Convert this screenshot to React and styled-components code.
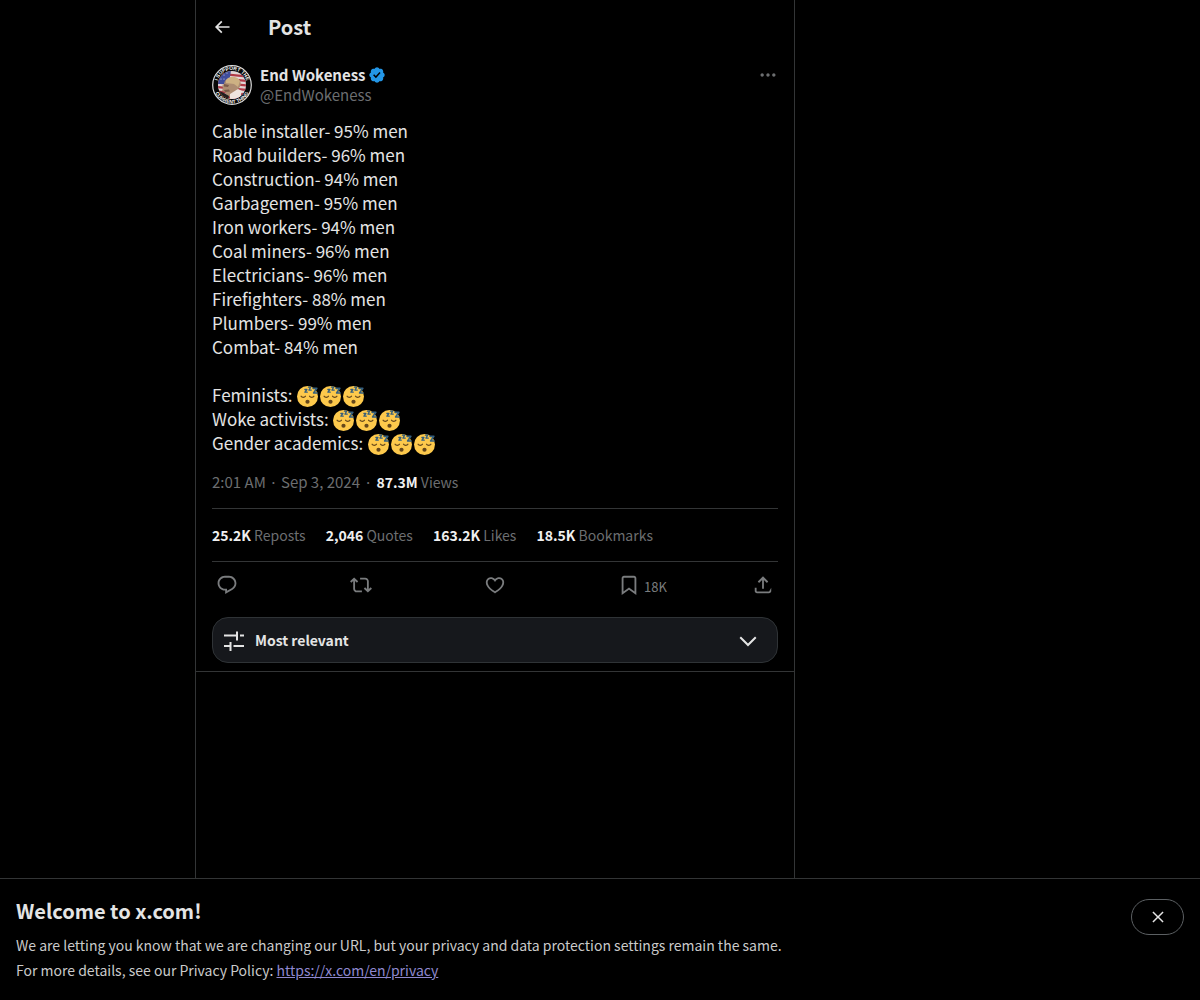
import React from 'react';
import styled, { createGlobalStyle } from 'styled-components';

const icons = {
  back: 'M7.414 13l5.043 5.04-1.414 1.42L3.586 12l7.457-7.46 1.414 1.42L7.414 11H21v2H7.414z',
  more: 'M3 12c0-1.1.9-2 2-2s2 .9 2 2-.9 2-2 2-2-.9-2-2zm9 2c1.1 0 2-.9 2-2s-.9-2-2-2-2 .9-2 2 .9 2 2 2zm7 0c1.1 0 2-.9 2-2s-.9-2-2-2-2 .9-2 2 .9 2 2 2z',
  reply: 'M1.751 10c0-4.42 3.584-8 8.005-8h4.366c4.49 0 8.129 3.64 8.129 8.13 0 2.96-1.607 5.68-4.196 7.11l-8.054 4.46v-3.69h-.067c-4.49.1-8.183-3.51-8.183-8.01zm8.005-6c-3.317 0-6.005 2.69-6.005 6 0 3.37 2.77 6.08 6.138 6.01l.351-.01h1.761v2.3l5.087-2.81c1.951-1.08 3.163-3.13 3.163-5.36 0-3.39-2.744-6.13-6.129-6.13H9.756z',
  repost: 'M4.5 3.88l4.432 4.14-1.364 1.46L5.5 7.55V16c0 1.1.896 2 2 2H13v2H7.5c-2.209 0-4-1.79-4-4V7.55L1.432 9.48.068 8.02 4.5 3.88zM16.5 6H11V4h5.5c2.209 0 4 1.79 4 4v8.45l2.068-1.93 1.364 1.46-4.432 4.14-4.432-4.14 1.364-1.46 2.068 1.93V8c0-1.1-.896-2-2-2z',
  like: 'M16.697 5.5c-1.222-.06-2.679.51-3.89 2.16l-.805 1.09-.806-1.09C9.984 6.01 8.526 5.44 7.304 5.5c-1.243.07-2.349.78-2.91 1.91-.552 1.12-.633 2.78.479 4.82 1.074 1.97 3.257 4.27 7.129 6.61 3.87-2.34 6.052-4.64 7.126-6.61 1.111-2.04 1.03-3.7.477-4.82-.561-1.13-1.666-1.84-2.908-1.91zm4.187 7.69c-1.351 2.48-4.001 5.12-8.379 7.67l-.503.3-.504-.3c-4.379-2.55-7.029-5.19-8.382-7.67-1.36-2.5-1.41-4.86-.514-6.67.887-1.79 2.647-2.91 4.601-3.01 1.651-.09 3.368.56 4.798 2.01 1.429-1.45 3.146-2.1 4.796-2.01 1.954.1 3.714 1.22 4.601 3.01.896 1.81.846 4.17-.514 6.67z',
  bookmark: 'M4 4.5C4 3.12 5.119 2 6.5 2h11C18.881 2 20 3.12 20 4.5v18.44l-8-5.71-8 5.71V4.5zM6.5 4c-.276 0-.5.22-.5.5v14.56l6-4.29 6 4.29V4.5c0-.28-.224-.5-.5-.5h-11z',
  share: 'M12 2.59l5.7 5.7-1.41 1.42L13 6.41V16h-2V6.41l-3.3 3.3-1.41-1.42L12 2.59zM21 15l-.02 3.51c0 1.38-1.12 2.49-2.5 2.49H5.5C4.11 21 3 19.88 3 18.5V15h2v3.5c0 .28.22.5.5.5h12.98c.28 0 .5-.22.5-.5L21 15z',
  close: 'M10.59 12L4.54 5.96l1.42-1.42L12 10.59l6.04-6.05 1.42 1.42L13.41 12l6.05 6.04-1.42 1.42L12 13.41l-6.04 6.05-1.42-1.42L10.59 12z',
  chevron: 'M3.543 9.96l1.414-1.42L12 15.59l7.043-7.05 1.414 1.42L12 18.41 3.543 9.96z',
  tune: 'M2 6.500h12V3.500h2v9h-2v-4H2zM18 6.500h4v2h-4zM2 17h5.500v-3h2v9h-2v-4H2zM11.500 17H22v2H11.500z',
};

const lines = [
  'Cable installer- 95% men',
  'Road builders- 96% men',
  'Construction- 94% men',
  'Garbagemen- 95% men',
  'Iron workers- 94% men',
  'Coal miners- 96% men',
  'Electricians- 96% men',
  'Firefighters- 88% men',
  'Plumbers- 99% men',
  'Combat- 84% men',
];

const sleepers = ['Feminists:', 'Woke activists:', 'Gender academics:'];

const stats = [
  { count: '25.2K', label: 'Reposts' },
  { count: '2,046', label: 'Quotes' },
  { count: '163.2K', label: 'Likes' },
  { count: '18.5K', label: 'Bookmarks' },
];

const actions = [
  { icon: 'reply', label: 'Reply' },
  { icon: 'repost', label: 'Repost' },
  { icon: 'like', label: 'Like' },
  { icon: 'bookmark', label: 'Bookmark', count: '18K' },
  { icon: 'share', label: 'Share' },
];

function Icon({ name, size = 22 }) {
  return (
    <Svg viewBox="0 0 24 24" $size={size} aria-hidden="true">
      <path d={icons[name]} />
    </Svg>
  );
}

function Verified() {
  return (
    <Badge viewBox="0 0 22 22" $size={18} role="img" aria-label="Verified account">
      <path d="M20.396 11c-.018-.646-.215-1.275-.57-1.816-.354-.54-.852-.972-1.438-1.246.223-.607.27-1.264.14-1.897-.131-.634-.437-1.218-.882-1.687-.47-.445-1.053-.75-1.687-.882-.633-.13-1.29-.083-1.897.14-.273-.587-.704-1.086-1.245-1.44S11.647 1.62 11 1.604c-.646.017-1.273.213-1.813.568s-.969.854-1.24 1.44c-.608-.223-1.267-.272-1.902-.14-.635.13-1.22.436-1.69.882-.445.47-.749 1.055-.878 1.688-.13.633-.08 1.29.144 1.896-.587.274-1.087.705-1.443 1.245-.356.54-.555 1.17-.574 1.817.02.647.218 1.276.574 1.817.356.54.856.972 1.443 1.245-.224.606-.274 1.263-.144 1.896.13.634.433 1.218.877 1.688.47.443 1.054.747 1.687.878.633.132 1.29.084 1.897-.136.274.586.705 1.084 1.246 1.439.54.354 1.17.551 1.816.569.647-.016 1.276-.213 1.817-.567s.972-.854 1.245-1.44c.604.239 1.266.296 1.903.164.636-.132 1.22-.447 1.68-.907.46-.46.776-1.044.908-1.681s.075-1.299-.165-1.903c.586-.274 1.084-.705 1.439-1.246.354-.54.551-1.17.569-1.816zM9.662 14.85l-3.429-3.428 1.293-1.302 2.072 2.072 4.4-4.794 1.347 1.246z" />
    </Badge>
  );
}

function SleepingFace() {
  return (
    <Emoji viewBox="0 0 36 36" role="img" aria-label="Sleeping face">
      <circle cx="18" cy="18" r="18" fill="#fdc94c" />
      <circle cx="18" cy="27" r="3.600" fill="#65471b" />
      <g fill="none" stroke="#65471b" strokeWidth="2.200" strokeLinecap="round">
        <path d="M7 17.500c1.500 2.600 6 2.600 7.500 0" />
        <path d="M21.500 17.500c1.500 2.600 6 2.600 7.500 0" />
      </g>
      <g fill="none" stroke="#355f7d" strokeWidth="2.200" strokeLinejoin="round" strokeLinecap="round">
        <path d="M13.500 6h3.500l-3.500 4.500h4" />
        <path d="M19.500 2h4l-3 5h4" />
        <path d="M27.500 4h6.500l-5.500 8h6" strokeWidth="2.800" />
      </g>
    </Emoji>
  );
}

function Avatar() {
  return (
    <AvatarSvg viewBox="0 0 40 40" role="img" aria-label="End Wokeness">
      <defs>
        <clipPath id="flag">
          <circle cx="20" cy="20" r="14" />
        </clipPath>
        <path id="topArc" d="M5 20a15 15 0 0 1 30 0" />
        <path id="bottomArc" d="M1.500 20a18.500 18.500 0 0 0 37 0" />
      </defs>
      <circle cx="20" cy="20" r="19.300" fill="#080808" stroke="#dcdcdc" strokeWidth="1.200" />
      <g clipPath="url(#flag)">
        <path fill="#e2d6d6" d="M5 5h30v30H5z" />
        <path stroke="#b03a46" strokeWidth="2.400" d="M5 8.500l30 3M5 13l30 3M5 17.500l30 3M5 22l30 3M5 26.500l30 3M5 31l30 3" />
        <path fill="#3f4d9c" d="M5 5h14l-2 14H5z" />
        <g fill="#d5d8e8">
          <circle cx="9" cy="14" r=".6" />
          <circle cx="12" cy="10" r=".6" />
          <circle cx="15" cy="8" r=".6" />
          <circle cx="12" cy="14" r=".6" />
        </g>
        <path fill="#ad8d72" d="M12.500 17c1-4 12-6 15.500-1 1.500 3 .5 6-2 8l-2 5-8 3-3-5-3-1 1-3-1-2 2-2z" />
        <path fill="#cdb183" d="M14 15c2-4 11-5 14 1l-2 6-4-3-8-1z" />
        <path fill="#7b5b4a" d="M12 19l5 1-1 2-4-.5zM12 25l5-.5 1 2-5 .5z" />
        <path fill="#eee5df" d="M18 29l8-5 4 2-2 7-10 2z" />
        <path fill="#201e1e" d="M5 25l7 3 5 3-1 4-11-3z" />
      </g>
      <AvatarText>
        <textPath href="#topArc" startOffset="50%" textAnchor="middle">I SUPPORT THE</textPath>
      </AvatarText>
      <AvatarText>
        <textPath href="#bottomArc" startOffset="50%" textAnchor="middle">CURRENT THING</textPath>
      </AvatarText>
    </AvatarSvg>
  );
}

export default function App() {
  return (
    <>
      <GlobalStyle />
      <Layout>
        <Column>
          <Header>
            <IconButton type="button" aria-label="Back">
              <Icon name="back" size={20} />
            </IconButton>
            <Title>Post</Title>
          </Header>
          <Post>
            <Author>
              <Avatar />
              <Names>
                <Name href="#profile">
                  End Wokeness <Verified />
                </Name>
                <Handle href="#profile">@EndWokeness</Handle>
              </Names>
              <MoreButton type="button" aria-label="More">
                <Icon name="more" size={20} />
              </MoreButton>
            </Author>
            <PostText>
              {lines.map((line) => (
                <div key={line}>{line}</div>
              ))}
              <br />
              {sleepers.map((line) => (
                <div key={line}>
                  {line} <SleepingFace />
                  <SleepingFace />
                  <SleepingFace />
                </div>
              ))}
            </PostText>
            <Meta>
              <time>2:01 AM · Sep 3, 2024</time>
              <span>·</span>
              <Stat>
                <Count>87.3M</Count> Views
              </Stat>
            </Meta>
            <Stats>
              {stats.map(({ count, label }) => (
                <Stat key={label}>
                  <Count>{count}</Count> {label}
                </Stat>
              ))}
            </Stats>
            <Actions>
              {actions.map(({ icon, label, count }) => (
                <ActionSlot key={icon}>
                  <ActionButton type="button" aria-label={label}>
                    <Icon name={icon} />
                    {count && <small>{count}</small>}
                  </ActionButton>
                </ActionSlot>
              ))}
            </Actions>
            <SortButton type="button">
              <Icon name="tune" size={24} />
              <span>Most relevant</span>
              <Icon name="chevron" size={24} />
            </SortButton>
          </Post>
        </Column>
      </Layout>
      <Banner>
        <div>
          <Title>Welcome to x.com!</Title>
          <BannerText>
            We are letting you know that we are changing our URL, but your privacy and data protection settings remain the same.
            <br />
            For more details, see our Privacy Policy: <a href="https://x.com/en/privacy">https://x.com/en/privacy</a>
          </BannerText>
        </div>
        <CloseButton type="button" aria-label="Close">
          <Icon name="close" size={18} />
        </CloseButton>
      </Banner>
    </>
  );
}

const GlobalStyle = createGlobalStyle`
  * {
    box-sizing: border-box;
  }
  body {
    margin: 0;
    background: #000;
    color: #e4e4e4;
    font-family: "Noto Sans CJK JP", "Noto Sans", sans-serif;
    font-size: 15px;
    line-height: 20px;
  }
  button {
    margin: 0;
    padding: 0;
    border: 0;
    background: none;
    color: inherit;
    font: inherit;
    cursor: pointer;
  }
`;

const Svg = styled.svg`
  display: block;
  flex: none;
  width: ${({ $size }) => $size}px;
  height: ${({ $size }) => $size}px;
  fill: currentColor;
`;

const Badge = styled(Svg)`
  color: #2396e6;
`;

const Emoji = styled.svg`
  width: 21px;
  height: 21px;
  margin: 0 1px;
  vertical-align: -5px;
`;

const AvatarSvg = styled.svg`
  flex: none;
  width: 40px;
  height: 40px;
`;

const AvatarText = styled.text`
  fill: #f2f2f2;
  font-family: "Liberation Sans", sans-serif;
  font-size: 5px;
  font-weight: 700;
`;

const Layout = styled.div`
  display: grid;
  grid-template-columns: minmax(0, 600px) minmax(0, 210px);
  justify-content: center;
  min-height: 100vh;
`;

const Column = styled.main`
  border: 1px solid #333536;
  border-width: 0 1px;
`;

const Header = styled.header`
  display: flex;
  align-items: center;
  gap: 36px;
  height: 53px;
  padding: 0 16px;
`;

const Title = styled.h2`
  margin: 0;
  font-size: 20px;
  font-weight: 700;
  line-height: 24px;
`;

const IconButton = styled.button`
  display: flex;
  justify-content: center;
  width: 20px;
`;

const Post = styled.article`
  padding: 12px 16px 8px;
  border-bottom: 1px solid #333536;
`;

const Author = styled.div`
  display: flex;
  gap: 8px;
`;

const Names = styled.div`
  display: flex;
  flex: 1;
  flex-direction: column;
  align-items: flex-start;
`;

const Name = styled.a`
  display: flex;
  align-items: center;
  gap: 2px;
  color: inherit;
  font-weight: 700;
  text-decoration: none;
`;

const Handle = styled.a`
  color: #6c6e70;
  text-decoration: none;
`;

const MoreButton = styled.button`
  align-self: flex-start;
  color: #6c6e70;
`;

const PostText = styled.div`
  margin-top: 14px;
  font-size: 17px;
  line-height: 24px;
`;

const Meta = styled.div`
  display: flex;
  gap: 4px;
  padding: 17px 0 16px;
  border-bottom: 1px solid #333536;
  color: #6c6e70;
`;

const Stat = styled.span`
  font-size: 14px;
`;

const Count = styled.strong`
  color: #f0f0f0;
  font-weight: 700;
`;

const Stats = styled.div`
  display: flex;
  flex-wrap: wrap;
  gap: 20px;
  padding: 16px 0;
  border-bottom: 1px solid #333536;
  color: #6c6e70;
`;

const Actions = styled.div`
  display: flex;
  align-items: flex-start;
  height: 48px;
  padding: 12px 4px;
  color: #7a7c7e;
`;

const ActionSlot = styled.div`
  flex: 1;

  &:last-child {
    flex: none;
  }
`;

const ActionButton = styled.button`
  display: flex;
  align-items: flex-start;
  gap: 4px;

  small {
    font-size: 13px;
    line-height: 26px;
  }
`;

const SortButton = styled.button`
  display: flex;
  align-items: center;
  gap: 9px;
  width: 100%;
  height: 46px;
  margin-top: 7px;
  padding: 0 17px 0 9px;
  border: 1px solid #2f3336;
  border-radius: 16px;
  background: #16181c;
  font-size: 14px;
  font-weight: 700;
  text-align: left;

  span {
    flex: 1;
  }
`;

const Banner = styled.footer`
  position: fixed;
  right: 0;
  bottom: 0;
  left: 0;
  display: flex;
  align-items: flex-start;
  justify-content: space-between;
  gap: 16px;
  padding: 20px 16px 17px;
  border-top: 1px solid #333536;
  background: #000;
`;

const BannerText = styled.p`
  margin: 10px 0 0;
  color: #cacaca;
  font-size: 14px;
  line-height: 25px;

  a {
    color: #8f88cf;
  }
`;

const CloseButton = styled.button`
  display: flex;
  flex: none;
  align-items: center;
  justify-content: center;
  width: 53px;
  height: 36px;
  border: 1px solid #5c6063;
  border-radius: 18px;
`;
